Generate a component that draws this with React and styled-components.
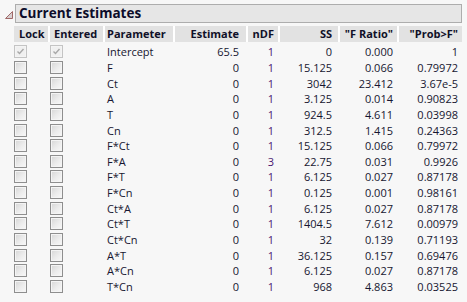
import React from "react";
import styled, { createGlobalStyle } from "styled-components";

const GlobalStyle = createGlobalStyle`
  body {
    margin: 0;
    background: #f7f7f7;
    font-family: "Open Sans", "Liberation Sans", sans-serif;
  }
`;

// column widths match the JMP report columns
const COLUMNS = "34px 53px 68px 71px 30px 58px 57px 63px";

const Page = styled.div`
  width: 467px;
  height: 302px;
  overflow: hidden;
  padding: 4px 5px 0 5px;
  box-sizing: border-box;
`;

const TitleRow = styled.div`
  display: flex;
  align-items: flex-start;
  gap: 2px;
`;

const Disclosure = styled.svg`
  width: 8px;
  height: 8px;
  margin-top: 7px;
  flex: none;
`;

const TitleBox = styled.div`
  flex: 1;
  height: 19px;
  box-sizing: border-box;
  border: 1px solid #adadad;
  background: #e6e6e6;
  padding-left: 3px;
  font-weight: 700;
  font-size: 13.5px;
  line-height: 17px;
  color: #0c0c2a;
`;

const Table = styled.div`
  margin: 3px 0 0 9px;
  width: 448px;
`;

const HeaderRow = styled.div`
  display: grid;
  grid-template-columns: ${COLUMNS};
  column-gap: 2px;
  background: #ffffff;
  height: 16px;
  margin-bottom: 2px;
`;

const HeadCell = styled.div`
  background: #e2e2e2;
  font-weight: 700;
  font-size: 11px;
  line-height: 16px;
  color: #101028;
  white-space: nowrap;
  text-align: ${(p) => (p.$left ? "left" : "right")};
  padding: ${(p) => (p.$left ? `0 0 0 ${p.$pad}px` : `0 ${p.$pad}px 0 0`)};
`;

const Row = styled.div`
  display: grid;
  grid-template-columns: ${COLUMNS};
  column-gap: 2px;
  height: 15.65px;
  align-items: center;
`;

const Cell = styled.div`
  font-size: 11px;
  line-height: 15px;
  color: ${(p) => p.$color || "#161630"};
  white-space: nowrap;
  text-align: ${(p) => (p.$left ? "left" : "right")};
  padding: ${(p) => (p.$left ? `0 0 0 ${p.$pad}px` : `0 ${p.$pad}px 0 0`)};
`;

const CheckBox = styled.div`
  width: 13px;
  height: 13px;
  box-sizing: border-box;
  border: 1px solid ${(p) => (p.$checked ? "#c4c4c4" : "#8e8e8e")};
  background: ${(p) =>
    p.$checked
      ? "#f0f0f0"
      : "linear-gradient(135deg, #d6d6d6 0%, #ececec 55%, #f8f8f8 100%)"};
  box-shadow: inset 0 0 0 1px #f4f4f4;
  display: flex;
  align-items: center;
  justify-content: center;
`;

const rows = [
  ["Intercept", "65.5", "1", "0", "0.000", "1"],
  ["F", "0", "1", "15.125", "0.066", "0.79972"],
  ["Ct", "0", "1", "3042", "23.412", "3.67e-5"],
  ["A", "0", "1", "3.125", "0.014", "0.90823"],
  ["T", "0", "1", "924.5", "4.611", "0.03998"],
  ["Cn", "0", "1", "312.5", "1.415", "0.24363"],
  ["F*Ct", "0", "1", "15.125", "0.066", "0.79972"],
  ["F*A", "0", "3", "22.75", "0.031", "0.9926"],
  ["F*T", "0", "1", "6.125", "0.027", "0.87178"],
  ["F*Cn", "0", "1", "0.125", "0.001", "0.98161"],
  ["Ct*A", "0", "1", "6.125", "0.027", "0.87178"],
  ["Ct*T", "0", "1", "1404.5", "7.612", "0.00979"],
  ["Ct*Cn", "0", "1", "32", "0.139", "0.71193"],
  ["A*T", "0", "1", "36.125", "0.157", "0.69476"],
  ["A*Cn", "0", "1", "6.125", "0.027", "0.87178"],
  ["T*Cn", "0", "1", "968", "4.863", "0.03525"],
];

function Box({ checked }) {
  return (
    <CheckBox $checked={checked}>
      {checked && (
        <svg width="9" height="9" viewBox="0 0 9 9">
          <path d="M1.5 4.5 L3.5 6.5 L7.5 2" fill="none" stroke="#a8a8a8" strokeWidth="1.4" />
        </svg>
      )}
    </CheckBox>
  );
}

export default function App() {
  return (
    <Page>
      <GlobalStyle />
      <TitleRow>
        <Disclosure viewBox="0 0 8 8">
          <polygon points="0.5,7.5 7.5,0.5 7.5,7.5" fill="#d8d0d0" stroke="#a06868" strokeWidth="1" />
        </Disclosure>
        <TitleBox>Current Estimates</TitleBox>
      </TitleRow>
      <Table>
        <HeaderRow>
          <HeadCell $left $pad={5}>Lock</HeadCell>
          <HeadCell $left $pad={4}>Entered</HeadCell>
          <HeadCell $left $pad={2}>Parameter</HeadCell>
          <HeadCell $pad={7}>Estimate</HeadCell>
          <HeadCell $pad={4}>nDF</HeadCell>
          <HeadCell $pad={6}>SS</HeadCell>
          <HeadCell $pad={4}>"F Ratio"</HeadCell>
          <HeadCell $pad={4}>"Prob&gt;F"</HeadCell>
        </HeaderRow>
        {rows.map((r, i) => (
          <Row key={r[0]}>
            <Box checked={i === 0} />
            <Box checked={i === 0} />
            <Cell $left $pad={2}>{r[0]}</Cell>
            <Cell $pad={7}>{r[1]}</Cell>
            <Cell $pad={4} $color="#4a1670">{r[2]}</Cell>
            <Cell $pad={6}>{r[3]}</Cell>
            <Cell $pad={4}>{r[4]}</Cell>
            <Cell $pad={4}>{r[5]}</Cell>
          </Row>
        ))}
      </Table>
    </Page>
  );
}
